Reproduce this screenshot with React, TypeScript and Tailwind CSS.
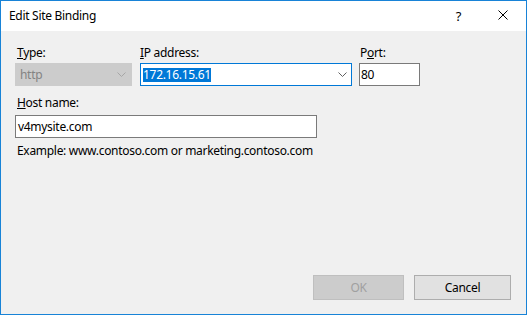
import type { ReactNode } from "react";

function Chevron({ color }: { color: string }) {
  return (
    <svg width="9" height="5" viewBox="0 0 9 5" className="shrink-0">
      <polyline points="0.5,0.5 4.5,4.5 8.5,0.5" fill="none" stroke={color} strokeWidth="1" />
    </svg>
  );
}

function Label({ children, className = "" }: { children: ReactNode; className?: string }) {
  return <div className={`h-4 leading-4 ${className}`}>{children}</div>;
}

export default function App() {
  return (
    <div className="w-[527px] h-[315px] border border-[#1883d7] bg-[#f0f0f0] flex flex-col font-['Noto_Sans',sans-serif] text-[12px] tracking-[-0.3px] text-black">
      <div className="h-[30px] shrink-0 bg-white flex items-center pl-2 pr-[18px]">
        <span className="leading-4">Edit Site Binding</span>
        <span className="ml-auto mr-[37px] leading-4 text-[13px]">?</span>
        <svg width="10" height="10" viewBox="0 0 10 10" className="-mt-[2px]">
          <path d="M0.5 0.5 L9.5 9.5 M9.5 0.5 L0.5 9.5" stroke="#000" strokeWidth="1" />
        </svg>
      </div>

      <div className="flex-1 flex flex-col px-[14px] pt-[14px] pb-[14px]">
        <div className="flex">
          <div className="w-[117px] flex flex-col">
            <Label className="pl-[2px]">
              <u>T</u>ype:
            </Label>
            <div className="mt-[2px] h-[23px] border border-[#cccccc] bg-[#cccccc] flex items-center pl-1 pr-[5px] text-[#838383]">
              <span className="flex-1">http</span>
              <Chevron color="#a6a6a6" />
            </div>
          </div>

          <div className="ml-2 w-[212px] flex flex-col">
            <Label>
              <u>I</u>P address:
            </Label>
            <div className="mt-[2px] h-[23px] border border-[#0078d7] bg-white flex items-center pl-[2px] pr-[4px]">
              <span className="flex-1">
                <span className="bg-[#0078d7] text-white leading-[14px] inline-block">172.16.15.61</span>
              </span>
              <Chevron color="#606060" />
            </div>
          </div>

          <div className="ml-[7px] w-[61px] flex flex-col">
            <Label className="pl-px">
              P<u>o</u>rt:
            </Label>
            <div className="mt-[2px] h-[23px] border border-[#7a7a7a] bg-white flex items-center pl-px">80</div>
          </div>
        </div>

        <Label className="mt-[9px] pl-[2px]">
          <u>H</u>ost name:
        </Label>
        <div className="mt-1 w-[302px] h-[23px] border border-[#7a7a7a] bg-white flex items-center pl-[2px]">
          v4mysite.com
        </div>
        <Label className="mt-[5px] pl-[2px]">Example: www.contoso.com or marketing.contoso.com</Label>

        <div className="mt-auto flex justify-end gap-[10px] pr-px">
          <button className="w-[91px] h-[25px] border border-[#bfbfbf] bg-[#cccccc] text-[#a0a0a0]">OK</button>
          <button className="w-[97px] h-[25px] border border-[#adadad] bg-[#e1e1e1] text-black">Cancel</button>
        </div>
      </div>
    </div>
  );
}
